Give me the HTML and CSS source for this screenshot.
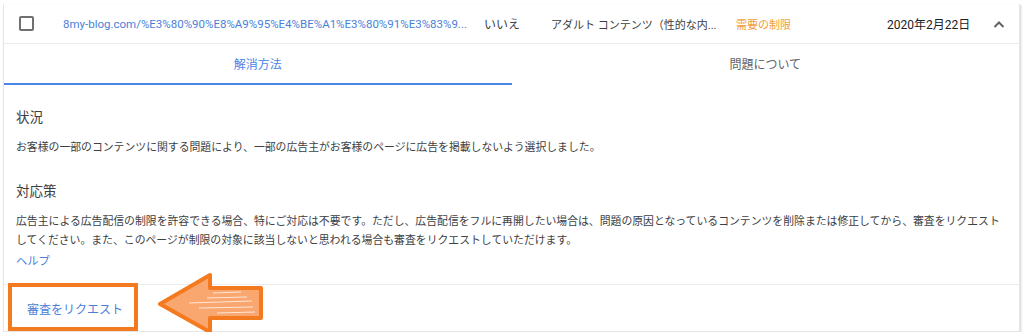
FILE: index.html
```html
<!DOCTYPE html>
<html lang="ja">
<head>
    <meta charset="UTF-8">
    <title>ポリシー センター - 問題の詳細</title>
    <link rel="stylesheet" href="styles.css">
</head>
<body>
    <div class="card">
        <div class="row-head">
            <div class="cell-check"><span class="checkbox"></span></div>
            <div class="cell-url">8my-blog.com/%E3%80%90%E8%A9%95%E4%BE%A1%E3%80%91%E3%83%9...</div>
            <div class="cell-ans">いいえ</div>
            <div class="cell-type">アダルト コンテンツ（性的な内...</div>
            <div class="cell-status">需要の制限</div>
            <div class="cell-date">2020年2月22日</div>
            <div class="cell-toggle">
                <svg width="12" height="8" viewBox="0 0 12 8"><path d="M1.5 7 L6 2.5 L10.5 7" fill="none" stroke="#5f6368" stroke-width="2"/></svg>
            </div>
        </div>

        <div class="tabs">
            <div class="tab active">解消方法</div>
            <div class="tab">問題について</div>
        </div>

        <div class="detail">
            <h3>状況</h3>
            <p>お客様の一部のコンテンツに関する問題により、一部の広告主がお客様のページに広告を掲載しないよう選択しました。</p>

            <h3 class="second">対応策</h3>
            <p>広告主による広告配信の制限を許容できる場合、特にご対応は不要です。ただし、広告配信をフルに再開したい場合は、問題の原因となっているコンテンツを削除または修正してから、審査をリクエストしてください。また、このページが制限の対象に該当しないと思われる場合も審査をリクエストしていただけます。</p>
            <a class="help" href="#">ヘルプ</a>
        </div>

        <div class="actions">
            <a class="request" href="#">審査をリクエスト</a>
        </div>

        <!-- annotation overlay -->
        <div class="mark-box"></div>
        <svg class="mark-arrow" width="110" height="64" viewBox="0 0 110 64">
            <polygon points="3,32 53,3 53,16 104,16 104,46 53,46 53,60" fill="#f9a66f" stroke="#f47a20" stroke-width="4" stroke-linejoin="round"/>
            <path d="M32 31 L95 29 M42 36 L96 35 M50 26 L90 25 M60 41 L98 40 M56 21 L84 20" stroke="#fde6d6" stroke-width="1.2" fill="none"/>
        </svg>
    </div>
</body>
</html>
```

FILE: styles.css
```css
body {
    margin: 0;
    padding: 4px 4px 0 3px;
    background: #fff;
    font-family: Roboto, "Noto Sans CJK JP", sans-serif;
    color: #3c4043;
}
.card {
    position: relative;
    width: 1015px;
    border: 1px solid #e6e6e6;
    border-top: none;
    box-shadow: 1px 1px 2px rgba(0,0,0,0.18);
}
.row-head {
    display: flex;
    align-items: center;
    height: 39px;
    border-bottom: 1px solid #ececec;
    font-size: 11px;
    white-space: nowrap;
}
.cell-check {
    width: 59px;
    padding-left: 15px;
    box-sizing: border-box;
    display: flex;
    align-items: center;
}
.checkbox {
    width: 11px;
    height: 11px;
    border: 2px solid #707070;
    border-radius: 2px;
}
.cell-url {
    width: 421px;
    font-size: 11.5px;
    color: #4a7fd8;
    overflow: hidden;
}
.cell-ans {
    width: 67px;
    font-size: 12px;
}
.cell-type {
    width: 185px;
    overflow: hidden;
}
.cell-status {
    width: 151px;
    color: #f29d38;
}
.cell-date {
    width: 104px;
    font-size: 12px;
    color: #202124;
}
.cell-toggle {
    display: flex;
    align-items: center;
    padding-left: 2px;
}
.tabs {
    display: flex;
    height: 41px;
}
.tab {
    flex: 1;
    display: flex;
    align-items: center;
    justify-content: center;
    font-size: 12px;
    color: #5f6368;
    border-bottom: 2px solid transparent;
}
.tab.active {
    color: #4a86e8;
    border-bottom-color: #4a86e8;
}
.detail {
    padding: 22px 12px 13px 12px;
}
.detail h3 {
    margin: 0;
    font-size: 13.5px;
    font-weight: normal;
    line-height: 20px;
    color: #3c4043;
}
.detail h3.second {
    margin-top: 24px;
}
.detail p {
    margin: 11px 0 0 0;
    font-size: 10.85px;
    line-height: 19px;
    color: #3c4043;
}
.help {
    display: block;
    margin-top: 2px;
    font-size: 11.3px;
    line-height: 19px;
    color: #4a7fd8;
    text-decoration: none;
}
.actions {
    height: 46px;
    border-top: 1px solid #ececec;
    display: flex;
    align-items: center;
    padding-left: 23px;
}
.request {
    font-size: 12px;
    color: #4a7fd8;
    text-decoration: none;
}
.mark-box {
    position: absolute;
    left: 4px;
    top: 279px;
    width: 122px;
    height: 40px;
    border: 4px solid #f47a20;
}
.mark-arrow {
    position: absolute;
    left: 153px;
    top: 268px;
}
```
